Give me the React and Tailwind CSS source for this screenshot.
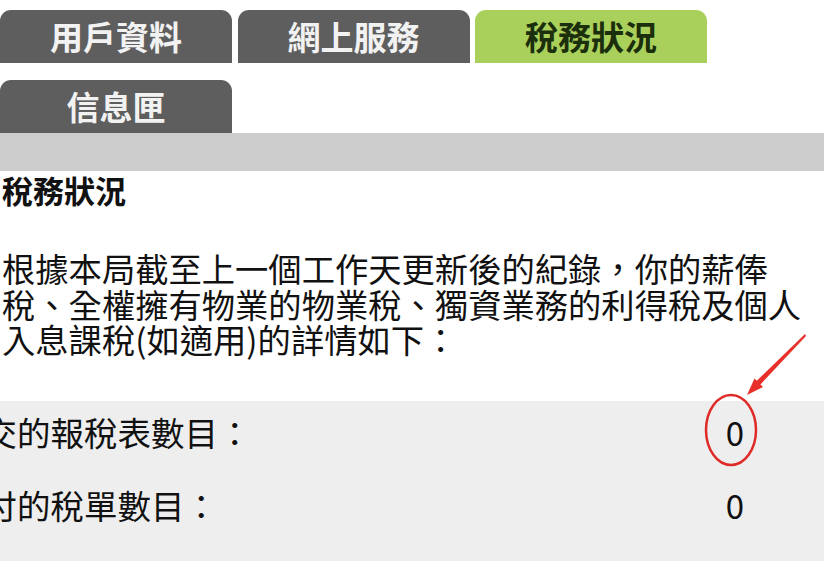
import React from "react"

const tabs = [
  { label: "用戶資料", active: false },
  { label: "網上服務", active: false },
  { label: "稅務狀況", active: true },
]

const rows = [
  { label: "未交的報稅表數目：", value: "0" },
  { label: "未付的稅單數目：", value: "0" },
]

const Tab = ({ label, active }) => (
  <div
    className={`w-[232px] h-[53px] rounded-t-[11px] flex items-center justify-center text-[33px] font-bold leading-none ${
      active ? "bg-[#a9d05b] text-[#1c2f0c]" : "bg-[#5e5e5e] text-[#f2f2f2]"
    }`}
  >
    {label}
  </div>
)

export default function App() {
  return (
    <div
      className="relative w-[824px] h-[561px] overflow-hidden bg-white text-[#111]"
      style={{ fontFamily: '"Noto Sans CJK TC", "Noto Sans", sans-serif' }}
    >
      {/* tabs */}
      <div className="pt-[10px] flex gap-[5.5px]">
        {tabs.map((t) => (
          <Tab key={t.label} {...t} />
        ))}
      </div>
      <div className="mt-[17px] flex">
        <Tab label="信息匣" />
      </div>
      <div className="h-[38px] bg-[#cccccc]" />

      {/* content */}
      <h2 className="pt-[1px] pl-[2px] text-[31px] font-bold leading-[36px]">稅務狀況</h2>
      <p className="mt-[42px] pl-[2px] pr-[8px] text-[33.3px] leading-[35.5px]">
        根據本局截至上一個工作天更新後的紀錄，你的薪俸稅、全權擁有物業的物業稅、獨資業務的利得稅及個人入息課稅(如適用)的詳情如下：
      </p>

      <div className="mt-[44px] h-[200px] bg-[#eeeeee] pt-[12px] flex flex-col gap-[35px] overflow-hidden">
        {rows.map((r) => (
          <div key={r.label} className="flex items-center justify-between text-[33.5px] leading-[38px]">
            <span className="-ml-[50px] whitespace-nowrap">{r.label}</span>
            <span className="w-[40px] mr-[69px] text-center text-[33px]">{r.value}</span>
          </div>
        ))}
      </div>

      {/* red annotation */}
      <svg className="absolute left-0 top-0 pointer-events-none" width="824" height="561" viewBox="0 0 824 561">
        <ellipse cx="731" cy="430" rx="25" ry="35" fill="none" stroke="#df2b27" strokeWidth="2.5" />
        <polygon points="805,334 806,336 759,386 755.5,382" fill="#e8302b" />
        <polygon points="747,395 763,387 754.5,378.5" fill="#e8302b" />
      </svg>
    </div>
  )
}
